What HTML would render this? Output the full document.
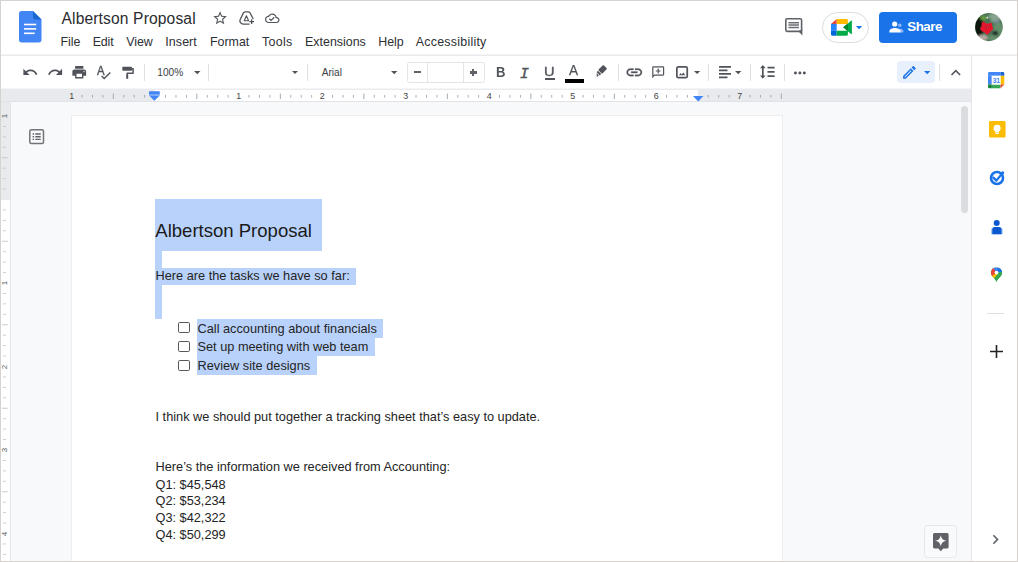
<!DOCTYPE html>
<html lang="en">
<head>
<meta charset="utf-8">
<title>Albertson Proposal - Google Docs</title>
<style>
*{box-sizing:border-box;margin:0;padding:0}
html,body{width:1018px;height:562px;overflow:hidden;background:#fff}
body{font-family:"Liberation Sans",sans-serif;color:#202124;position:relative}
#root{position:absolute;left:0;top:0;width:1018px;height:562px;overflow:hidden;background:#fff}
#frame{position:absolute;left:0;top:0;width:1018px;height:562px;border:1px solid #d6d2d0;z-index:100;pointer-events:none}
.abs{position:absolute}
svg{position:absolute;display:block;overflow:visible}
.t{position:absolute;white-space:nowrap;line-height:1}
/* header */
#hdrline{left:1px;top:54px;width:1016px;height:2px;background:linear-gradient(#f5f6f7 50%,#e8eaed 50%)}
.menu{font-size:12.400px;color:#2d2f33;top:36.100px}
#title{left:61.500px;top:10.900px;font-size:15.600px;letter-spacing:0.140px;color:#2a2c30}
/* toolbar */
.sep{position:absolute;width:1px;background:#dfe1e5;top:64px;height:17px}
.tb{font-size:10.150px;color:#3c4043;top:67.6px}
/* ruler */
#rulerbg{left:1px;top:89px;width:971px;height:13px;background:#e8eaed}
#rulerwhite{left:155px;top:89px;width:543px;height:13px;background:#fff}
.rn{font-size:8.900px;color:#444;top:91.600px;width:12px;text-align:center}
.vn{font-size:7.900px;color:#5a5e63;transform:rotate(-90deg);width:8px;text-align:center;height:10px;line-height:10px}
/* workspace */
#work{left:1px;top:102px;width:971px;height:459px;background:#f8f9fa}
#vruler{left:1px;top:102px;width:10px;height:459px;background:#fff;border-right:1px solid #e3e5e8}
#vrulergray{left:1px;top:102px;width:9px;height:98px;background:#e8eaed}
#page{left:72px;top:116px;width:710px;height:460px;background:#fff;box-shadow:0 0 0 1px #eceef0}
.sel{position:absolute;background:#b9d2fb}
.doc{color:#242424;font-size:12.75px}
#h1{font-size:18.55px;color:#1a1a1a}
.cb{position:absolute;width:11.600px;height:11.400px;border:1.500px solid #585858;border-radius:1.800px;background:#fff;left:178.2px}
/* side panel */
#side{left:971px;top:56px;width:46px;height:505px;background:#fff;border-left:1px solid #e4e6e9}
</style>
</head>
<body>
<div id="root">

<!-- ===== HEADER ===== -->
<svg id="docsicon" style="left:19px;top:11px" width="22.500" height="31.500" viewBox="0 0 22.500 31.500">
  <path d="M2.700 0H14L22.500 8.500V28.800a2.700 2.700 0 0 1-2.700 2.700H2.700A2.700 2.700 0 0 1 0 28.800V2.700A2.700 2.700 0 0 1 2.700 0z" fill="#4285f4"/>
  <path d="M14 0L22.500 8.500H16.200a2.200 2.200 0 0 1-2.200-2.200z" fill="#1a67d2"/>
  <rect x="5" y="12.700" width="12.200" height="1.600" fill="#fff"/>
  <rect x="5" y="17.100" width="12.200" height="1.600" fill="#fff"/>
  <rect x="5" y="21.500" width="10.700" height="1.600" fill="#fff"/>
</svg>
<div class="t" id="title">Albertson Proposal</div>

<div class="t menu" id="m1" style="left:60.500px;letter-spacing:-0.050px">File</div>
<div class="t menu" id="m2" style="left:92.700px;letter-spacing:-0.150px">Edit</div>
<div class="t menu" id="m3" style="left:126.200px;letter-spacing:-0.050px">View</div>
<div class="t menu" id="m4" style="left:165.300px;letter-spacing:0.100px">Insert</div>
<div class="t menu" id="m5" style="left:209.900px;letter-spacing:0.030px">Format</div>
<div class="t menu" id="m6" style="left:262px;letter-spacing:0.320px">Tools</div>
<div class="t menu" id="m7" style="left:305.100px;letter-spacing:0.010px">Extensions</div>
<div class="t menu" id="m8" style="left:378.300px;letter-spacing:-0.050px">Help</div>
<div class="t menu" id="m9" style="left:415.800px;letter-spacing:0.250px">Accessibility</div>


<!-- title icons -->
<svg id="star" style="left:211.550px;top:10px" width="16.200" height="16.200" viewBox="0 0 24 24"><path fill="#50545a" d="M22 9.240l-7.190-.620L12 2 9.190 8.630 2 9.240l5.460 4.730L5.820 21 12 17.270 18.180 21l-1.630-7.030L22 9.240zM12 15.400l-3.760 2.270 1-4.280-3.320-2.880 4.380-.380L12 6.100l1.710 4.040 4.380.380-3.320 2.880 1 4.280L12 15.400z"/></svg>
<svg id="drive" style="left:238.500px;top:10.500px" width="16" height="14.500" viewBox="0 0 16 14.500"><path fill="none" stroke="#50545a" stroke-width="1.300" stroke-linecap="round" stroke-linejoin="round" d="M10.100 13.100H4.200Q2.400 13.100 1.300 11.400Q0.400 10 1.200 8.500L4.300 2.100Q4.900 0.900 6.200 0.900H9.300Q10.500 0.900 11.100 2L14 7.500"/><path fill="none" stroke="#50545a" stroke-width="1.100" stroke-linejoin="round" d="M7.400 4.800L5.200 9.700H9.600z"/><path fill="none" stroke="#50545a" stroke-width="1.300" d="M10.300 10.700h4.700M12.650 8.300v4.800"/></svg>
<svg id="cloud" style="left:265px;top:10.600px" width="14.500" height="14.500" viewBox="0 0 24 24"><path fill="#50545a" d="M19.350 10.040C18.670 6.590 15.640 4 12 4 9.110 4 6.600 5.640 5.350 8.040 2.340 8.360 0 10.910 0 14c0 3.310 2.690 6 6 6h13c2.760 0 5-2.240 5-5 0-2.640-2.050-4.780-4.650-4.960zM19 18H6c-2.210 0-4-1.790-4-4 0-2.050 1.530-3.760 3.560-3.970l1.070-.110.500-.950C8.080 7.140 9.940 6 12 6c2.620 0 4.880 1.860 5.390 4.430l.300 1.500 1.530.110c1.560.100 2.780 1.410 2.780 2.960 0 1.650-1.350 3-3 3zm-9-3.820l-2.090-2.090L6.500 13.500 10 17l6.010-6.010-1.410-1.410z"/></svg>

<!-- comment history -->
<svg id="cmt" style="left:784.800px;top:17.700px" width="17.400" height="17.600" viewBox="0 0 17.400 17.600"><rect x="0.800" y="0.800" width="15.800" height="12.600" rx="1.300" fill="none" stroke="#5f6368" stroke-width="1.600"/><path d="M13.300 13.300L17.400 17.400V11.500z" fill="#5f6368"/><path d="M3.500 4h10.500v1.500H3.500zM3.500 6.300h10.500v1.500H3.500zM3.500 8.700h10.500v1.500H3.500z" fill="#6a6e73"/></svg>

<!-- meet pill -->
<div class="abs" id="meet" style="left:822.400px;top:11.700px;width:46.300px;height:31px;border:1px solid #dadce0;border-radius:15.500px;background:#fff"></div>
<svg id="meeticon" style="left:831px;top:19px" width="21" height="16.800" viewBox="0 0 21 16.800">
  <path d="M0 4.900L5.700 0V4.900z" fill="#ea4335"/>
  <path d="M5.700 0H15.400a1.500 1.500 0 0 1 1.500 1.500V4.900H5.700z" fill="#ffba00"/>
  <path d="M0 4.900H5.700V11.800H0z" fill="#2684fc"/>
  <path d="M0 11.800H5.700V16.800H1.500A1.500 1.500 0 0 1 0 15.300z" fill="#0066da"/>
  <path d="M5.700 11.800H16.900V15.300a1.500 1.500 0 0 1-1.500 1.500H5.700z" fill="#00ac47"/>
  <path d="M12.200 8.350L16.900 4.400L20 1.700c.400-.350.900-.100.900.400V14.600c0 .500-.500.750-.900.400L16.900 12.300z" fill="#00ac47"/>
  <path d="M12.200 8.350L16.900 4.400V12.300z" fill="#00832d"/>
</svg>
<svg id="meetarrow" style="left:856px;top:25.500px" width="6.200" height="3.200" viewBox="0 0 10 5"><path d="M0 0h10L5 5z" fill="#1a73e8"/></svg>

<!-- share -->
<div class="abs" id="share" style="left:879.200px;top:11.700px;width:78px;height:31px;border-radius:4px;background:#1a73e8"></div>
<svg id="shareicon" style="left:889px;top:20.300px" width="15.500" height="13" viewBox="0 0 15.500 13">
  <circle cx="10.800" cy="5.200" r="1.800" fill="#8ab4f8"/>
  <path d="M10.200 8.600c2.200 0 4.200 1 4.200 2.500V12.400H11z" fill="#8ab4f8"/>
  <circle cx="5.700" cy="4" r="2.600" fill="#fff"/>
  <path d="M5.900 8.100C3.600 8.100.400 9.100.400 11v1.400H11.600V11c0-1.900-3.400-2.900-5.700-2.900z" fill="#fff"/>
</svg>
<div class="t" id="sharetxt" style="left:907.300px;top:19.700px;font-size:13.400px;font-weight:bold;color:#fff;letter-spacing:-0.520px">Share</div>

<!-- avatar -->
<svg id="avatar" style="left:974.6px;top:12.6px" width="27.800" height="28.200" viewBox="0 0 27.800 28.200">
  <defs><clipPath id="avc"><ellipse cx="13.900" cy="14.100" rx="13.900" ry="14.100"/></clipPath>
  <filter id="avb" x="-20%" y="-20%" width="140%" height="140%"><feGaussianBlur stdDeviation="1.100"/></filter>
  <filter id="avb2" x="-20%" y="-20%" width="140%" height="140%"><feGaussianBlur stdDeviation="0.450"/></filter></defs>
  <g clip-path="url(#avc)">
    <g filter="url(#avb)">
    <rect x="-6" y="-6" width="40" height="40" fill="#4c7454"/>
    <ellipse cx="4.1" cy="13.9" rx="5.0" ry="10.7" fill="#0e120e" opacity="1"/>
    <ellipse cx="8.3" cy="5.0" rx="3.2" ry="2.0" fill="#6aa040" opacity="1"/>
    <ellipse cx="19.0" cy="4.7" rx="6.4" ry="4.3" fill="#86a48f" opacity="1"/>
    <ellipse cx="21.9" cy="8.9" rx="2.5" ry="2.1" fill="#7d88a0" opacity="1"/>
    <ellipse cx="23.3" cy="16.8" rx="5.0" ry="7.8" fill="#64906c" opacity="1"/>
    <ellipse cx="20.4" cy="20.3" rx="2.8" ry="2.5" fill="#16241a" opacity="1"/>
    <ellipse cx="7.6" cy="24.6" rx="5.3" ry="2.8" fill="#b5aaa2" opacity="1"/>
    <ellipse cx="18.3" cy="25.3" rx="5.0" ry="3.2" fill="#668f6c" opacity="1"/>
    <ellipse cx="14.0" cy="6.8" rx="2.1" ry="1.8" fill="#3e6a46" opacity="1"/>
    </g>
    <g filter="url(#avb2)">
    <circle cx="12.3" cy="4.7" r="0.900" fill="#dfe8df"/>
    <polygon points="6.6,9.6 8.7,8.6 11.5,10.7 16.9,10.0 17.2,13.2 18.3,16.0 15.8,18.2 14.0,20.3 12.3,21.7 9.4,19.6 5.9,17.5 5.1,15.3 6.6,12.8" fill="#e3172d"/>
    <circle cx="12.3" cy="14.3" r="1.800" fill="#c01228"/>
    <circle cx="12.4" cy="14.3" r="0.700" fill="#d86070"/>
    </g>
  </g>
</svg>

<div class="abs" id="hdrline"></div>

<!-- ===== TOOLBAR ===== -->
<div class="sep" style="left:144px"></div>
<div class="t tb" id="zoomtxt" style="left:157.3px">100%</div>
<div class="sep" style="left:208px"></div>
<div class="sep" style="left:307px"></div>
<div class="t tb" id="fonttxt" style="left:321.7px">Arial</div>


<!-- toolbar icons -->
<svg id="undo" style="left:21.75px;top:64.25px" width="16.5" height="16.5" viewBox="0 0 24 24"><path fill="#50545a" d="M12.5 8c-2.65 0-5.05.99-6.9 2.6L2 7v9h9l-3.62-3.62c1.39-1.16 3.16-1.88 5.12-1.88 3.54 0 6.55 2.31 7.6 5.5l2.37-.78C21.08 11.03 17.15 8 12.5 8z"/></svg>
<svg id="redo" style="left:46.75px;top:64.25px" width="16.5" height="16.5" viewBox="0 0 24 24"><path fill="#50545a" d="M18.4 10.6C16.55 8.99 14.15 8 11.5 8c-4.65 0-8.58 3.03-9.96 7.22L3.9 16c1.05-3.19 4.05-5.5 7.6-5.5 1.95 0 3.73.72 5.12 1.88L13 16h9V7l-3.6 3.6z"/></svg>
<svg id="print" style="left:70.75px;top:63.95px" width="16.5" height="16.5" viewBox="0 0 24 24"><path fill="#50545a" d="M19 8H5c-1.66 0-3 1.34-3 3v6h4v4h12v-4h4v-6c0-1.66-1.34-3-3-3zm-3 11H8v-5h8v5zm3-7c-.55 0-1-.45-1-1s.45-1 1-1 1 .45 1 1-.45 1-1 1zm-1-9H6v4h12V3z"/></svg>
<div class="t" id="spellA" style="left:96.700px;top:64.700px;font-size:12.200px;color:#50545a;-webkit-text-stroke:0.400px #50545a;transform:scaleX(0.93);transform-origin:0 0">A</div>
<svg id="spell" style="left:101px;top:71.500px" width="10" height="8" viewBox="0 0 10 8"><path d="M0.600 4l2.600 2.600L9.300 0.600" fill="none" stroke="#50545a" stroke-width="1.400"/></svg>
<svg id="paint" style="left:122px;top:66px" width="13" height="13.500" viewBox="0 0 13 13.500"><rect x="0.300" y="0.700" width="9.700" height="4.100" rx="0.800" fill="#50545a"/><path d="M9.900 2.800H11.100V7.200H5.200V9" fill="none" stroke="#50545a" stroke-width="1.500" stroke-linejoin="round"/><path d="M4.200 8.500h2v4.300H4.200z" fill="#50545a"/></svg>
<svg id="za" style="left:194.00px;top:70.97px" width="6.50" height="3.25" viewBox="0 0 10 5"><path d="M0 0h10L5 5z" fill="#50545a"/></svg>
<svg id="sa" style="left:292.40px;top:71.10px" width="6.00" height="3.00" viewBox="0 0 10 5"><path d="M0 0h10L5 5z" fill="#50545a"/></svg>
<svg id="fa" style="left:391.40px;top:71.00px" width="6.40" height="3.20" viewBox="0 0 10 5"><path d="M0 0h10L5 5z" fill="#50545a"/></svg>
<div class="abs" id="fsbox" style="left:406.800px;top:61.800px;width:78px;height:20.800px;border:1px solid #e1e3e6;border-radius:2.500px"></div>
<div class="abs" style="left:427.200px;top:62px;width:1px;height:20.500px;background:#e1e3e6"></div>
<div class="abs" style="left:463.300px;top:62px;width:1px;height:20.500px;background:#e1e3e6"></div>
<div class="abs" id="minus" style="left:414.100px;top:70.700px;width:7.100px;height:2.200px;background:#5f6368"></div>
<div class="abs" id="plush" style="left:469.800px;top:71.450px;width:7.100px;height:2.200px;background:#5f6368"></div>
<div class="abs" id="plusv" style="left:472.250px;top:69px;width:2.200px;height:7.100px;background:#5f6368"></div>
<div class="t" id="bold" style="left:495.600px;top:64.800px;font-size:14.500px;font-weight:bold;color:#50545a;transform:scaleX(0.9);transform-origin:0 0">B</div>
<div class="t" id="italic" style="left:519.800px;top:66.600px;font-family:'Liberation Mono',monospace;font-style:italic;font-size:15.400px;color:#50545a;-webkit-text-stroke:0.350px #50545a">I</div>
<div class="t" id="under" style="left:543.900px;top:65px;font-size:13.300px;color:#50545a;-webkit-text-stroke:0.350px #50545a;transform:scaleX(1.1);transform-origin:0 0">U</div>
<div class="abs" id="underbar" style="left:544.800px;top:78.400px;width:9.800px;height:1.300px;background:#50545a"></div>
<div class="t" id="tcolor" style="left:569.300px;top:62.700px;font-size:14.600px;color:#50545a;-webkit-text-stroke:0.250px #50545a;transform:scaleX(0.93);transform-origin:0 0">A</div>
<div class="abs" id="tcbar" style="left:565.100px;top:78.800px;width:19.100px;height:3.800px;background:#000"></div>
<svg id="hl" style="left:595px;top:64.800px" width="12" height="12" viewBox="-6 -6 12 12"><g transform="rotate(-45)"><rect x="-1.300" y="-2.800" width="7.300" height="5.600" rx="0.900" fill="#50545a"/><path d="M-2 -2.300H-4V2.300H-2z" fill="#50545a"/><path d="M-4.600 -1.500V1.500H-7.400z" fill="#50545a"/></g></svg>
<div class="sep" style="left:617.500px"></div>
<svg id="link" style="left:624.50px;top:63.00px" width="18.6" height="18.6" viewBox="0 0 24 24"><path stroke="#50545a" stroke-width="0.350" fill="#50545a" d="M3.9 12c0-1.71 1.39-3.1 3.1-3.1h4V7H7c-2.76 0-5 2.24-5 5s2.24 5 5 5h4v-1.9H7c-1.71 0-3.1-1.39-3.1-3.1zM8 13h8v-2H8v2zm9-6h-4v1.900h4c1.710 0 3.100 1.390 3.100 3.100s-1.390 3.100-3.100 3.100h-4V17h4c2.760 0 5-2.240 5-5s-2.240-5-5-5z"/></svg>
<svg id="addc" style="left:651.00px;top:65.40px" width="14.4" height="14.4" viewBox="0 0 24 24"><path fill="#50545a" d="M20 2H4c-1.100 0-2 .900-2 2v18l4-4h14c1.100 0 2-.900 2-2V4c0-1.100-.900-2-2-2zm0 14H5.170L4 17.170V4h16v12zM11 6h2v3h3v2h-3v3h-2v-3H8V9h3z"/></svg>
<svg id="image" style="left:676px;top:66.200px" width="12.100" height="12.500" viewBox="0 0 12.100 12.500"><rect x="0.850" y="0.850" width="10.400" height="10.800" rx="1.500" fill="none" stroke="#50545a" stroke-width="1.700"/><path d="M3 9.200L4.700 7l1.100 1.400L7.300 6.500 9.300 9.200z" fill="#50545a"/></svg>
<svg id="ia" style="left:693.60px;top:71.05px" width="6.20" height="3.10" viewBox="0 0 10 5"><path d="M0 0h10L5 5z" fill="#50545a"/></svg>
<div class="sep" style="left:708px"></div>
<svg id="align" style="left:719.200px;top:66.100px" width="12" height="12.500" viewBox="0 0 12 12.500"><path d="M0 0.100h12v1.700H0zM0 3.500h8.500v1.700H0zM0 7.100h12v1.700H0zM0 10.600h8.500v1.700H0z" fill="#50545a"/></svg>
<svg id="aa" style="left:735.40px;top:71.00px" width="6.40" height="3.20" viewBox="0 0 10 5"><path d="M0 0h10L5 5z" fill="#50545a"/></svg>
<div class="sep" style="left:750.300px"></div>
<svg id="lsp" style="left:759.600px;top:65.400px" width="14.800" height="13.800" viewBox="0 0 14.800 13.800"><path d="M2.800 0L5.600 3.300H3.650V10.500H5.600L2.800 13.800 0 10.500H1.950V3.300H0z" fill="#50545a"/><path d="M7.500 1.700h7.100v1.800H7.500zM7.500 6h7.100v1.800H7.500zM7.500 10.300h7.100v1.800H7.500z" fill="#50545a"/></svg>
<div class="sep" style="left:783.900px"></div>
<svg id="more" style="left:791.30px;top:63.70px" width="17.8" height="17.8" viewBox="0 0 24 24"><path fill="#50545a" d="M6 10c-1.100 0-2 .900-2 2s.900 2 2 2 2-.900 2-2-.900-2-2-2zm12 0c-1.100 0-2 .900-2 2s.900 2 2 2 2-.900 2-2-.900-2-2-2zm-6 0c-1.100 0-2 .900-2 2s.900 2 2 2 2-.900 2-2-.900-2-2-2z"/></svg>
<div class="abs" id="editbox" style="left:897.400px;top:61px;width:37.500px;height:22px;border-radius:4px;background:#e8f0fe"></div>
<svg id="edit" style="left:901.20px;top:63.80px" width="16.8" height="16.8" viewBox="0 0 24 24"><path fill="#1a73e8" d="M14.060 9.020l.920.920L5.920 19H5v-.920l9.060-9.060M17.660 3c-.250 0-.510.100-.700.290l-1.830 1.830 3.750 3.750 1.830-1.830c.390-.390.390-1.020 0-1.410l-2.340-2.340c-.200-.200-.450-.290-.710-.290zm-3.600 3.190L3 17.250V21h3.750L17.810 9.940l-3.750-3.750z"/></svg>
<svg id="ea" style="left:924.00px;top:70.80px" width="6.40" height="3.20" viewBox="0 0 10 5"><path d="M0 0h10L5 5z" fill="#1a73e8"/></svg>
<div class="sep" style="left:939.200px"></div>
<svg id="less" style="left:946.20px;top:62.60px" width="19.6" height="19.6" viewBox="0 0 24 24"><path fill="#50545a" d="M12 8l-6 6 1.410 1.410L12 10.830l4.590 4.580L18 14z"/></svg>

<!-- ===== RULER ===== -->
<div class="abs" id="rulerbg"></div>
<div class="abs" id="rulerwhite"></div>
<div class="abs" style="left:1px;top:88px;width:971px;height:1px;background:#f4f5f7"></div>
<div class="abs" style="left:155px;top:89px;width:543px;height:1px;background:#e9ebee"></div>
<div class="abs" style="left:1px;top:101px;width:971px;height:1px;background:#e1e3e7"></div>


<!-- ruler ticks -->
<svg id="hticks" style="left:0;top:89px" width="972" height="13" viewBox="0 0 972 13">
<path d="M82.04 6v2.600M92.47 6v2.600M102.91 6v2.600M113.35 4.600v5.400M123.79 6v2.600M134.22 6v2.600M144.66 6v2.600M165.54 6v2.600M175.97 6v2.600M186.41 6v2.600M196.85 4.600v5.400M207.29 6v2.600M217.72 6v2.600M228.16 6v2.600M249.04 6v2.600M259.48 6v2.600M269.91 6v2.600M280.35 4.600v5.400M290.79 6v2.600M301.23 6v2.600M311.66 6v2.600M332.54 6v2.600M342.98 6v2.600M353.41 6v2.600M363.85 4.600v5.400M374.29 6v2.600M384.73 6v2.600M395.16 6v2.600M416.04 6v2.600M426.48 6v2.600M436.91 6v2.600M447.35 4.600v5.400M457.79 6v2.600M468.23 6v2.600M478.66 6v2.600M499.54 6v2.600M509.98 6v2.600M520.41 6v2.600M530.85 4.600v5.400M541.29 6v2.600M551.73 6v2.600M562.16 6v2.600M583.04 6v2.600M593.48 6v2.600M603.91 6v2.600M614.35 4.600v5.400M624.79 6v2.600M635.23 6v2.600M645.66 6v2.600M666.54 6v2.600M676.98 6v2.600M687.41 6v2.600M708.29 6v2.600M718.73 6v2.600M729.16 6v2.600M750.04 6v2.600M760.48 6v2.600M770.91 6v2.600M781.35 4.600v5.400" stroke="#9aa0a6" stroke-width="0.900" fill="none"/>
</svg>
<div class="t rn" style="left:65.6px">1</div>
<div class="t rn" style="left:232.6px">1</div>
<div class="t rn" style="left:316.1px">2</div>
<div class="t rn" style="left:399.6px">3</div>
<div class="t rn" style="left:483.1px">4</div>
<div class="t rn" style="left:566.6px">5</div>
<div class="t rn" style="left:650.1px">6</div>
<div class="t rn" style="left:733.6px">7</div>
<svg id="lmark" style="left:149.100px;top:91.300px" width="10.800" height="9.800" viewBox="0 0 10.800 9.800"><path d="M0.600 0.200h9.600a.6.6 0 0 1 .6.600v2.900H0V.800a.6.6 0 0 1 .6-.600z" fill="#4285f4"/><path d="M0 3.700h10.800v.8H0z" fill="#8ab4f8"/><path d="M0 4.500h10.800L5.400 9.800z" fill="#4285f4"/></svg>
<svg id="rmark" style="left:692.500px;top:95.600px" width="10.400" height="5.400" viewBox="0 0 10.400 5.400"><path d="M0 0h10.400L5.200 5.400z" fill="#4285f4"/></svg>

<!-- ===== WORKSPACE ===== -->
<div class="abs" id="work"></div>
<div class="abs" id="vruler"></div>
<div class="abs" id="vrulergray"></div>
<div class="abs" id="page"></div>


<!-- vertical ruler ticks -->
<svg id="vticks" style="left:1px;top:102px" width="10" height="459" viewBox="0 0 10 459">
<path d="M2 24.44h2.900M2 34.88h2.900M2 45.31h2.900M1 55.75h5.800M2 66.19h2.900M2 76.62h2.900M2 87.06h2.900M2 107.94h2.900M2 118.38h2.900M2 128.81h2.900M1 139.25h5.800M2 149.69h2.900M2 160.12h2.900M2 170.56h2.900M2 191.44h2.900M2 201.88h2.900M2 212.31h2.900M1 222.75h5.800M2 233.19h2.900M2 243.62h2.900M2 254.06h2.900M2 274.94h2.900M2 285.38h2.900M2 295.81h2.900M1 306.25h5.800M2 316.69h2.900M2 327.12h2.900M2 337.56h2.900M2 358.44h2.900M2 368.88h2.900M2 379.31h2.900M1 389.75h5.800M2 400.19h2.900M2 410.62h2.900M2 421.06h2.900M2 441.94h2.900M2 452.38h2.900" stroke="#c3c6cb" stroke-width="0.900" fill="none"/>
</svg>
<div class="t vn" style="left:1.200px;top:111.0px">1</div>
<div class="t vn" style="left:1.200px;top:278.0px">1</div>
<div class="t vn" style="left:1.200px;top:361.5px">2</div>
<div class="t vn" style="left:1.200px;top:445.0px">3</div>
<div class="t vn" style="left:1.200px;top:528.5px">4</div>
<svg id="outline" style="left:29px;top:129.400px" width="15.300" height="15.300" viewBox="0 0 15.300 15.300"><rect x="0.800" y="0.800" width="13.700" height="13.700" rx="1.600" fill="none" stroke="#70757a" stroke-width="1.500"/><path d="M3.600 4.300h1.500v1.400H3.600zM6.300 4.300h5.400v1.400H6.300zM3.600 7h1.500v1.400H3.600zM6.300 7h5.400v1.400H6.300zM3.600 9.700h1.500v1.400H3.600zM6.300 9.700h5.400v1.400H6.300z" fill="#5f6368"/></svg>
<div class="abs" id="scroll" style="left:961px;top:105.800px;width:7.200px;height:107.400px;border-radius:3.600px;background:#dadce0"></div>
<div class="abs" id="explore" style="left:924.300px;top:525.400px;width:32.800px;height:33px;border-radius:3.500px;background:#f9fafb;border:1px solid #e6e8eb"></div>
<svg id="exploreicon" style="left:933.400px;top:532.800px" width="15.600" height="18.500" viewBox="0 0 15.600 18.500"><path d="M1.500 0h12.600a1.500 1.500 0 0 1 1.500 1.500v12.600a1.500 1.500 0 0 1-1.500 1.500H10.300L7.800 18.300 5.300 15.600H1.500A1.500 1.500 0 0 1 0 14.100V1.500A1.500 1.500 0 0 1 1.500 0z" fill="#5f6368"/><path d="M7.800 2C8.400 5.700 9.900 7.200 13.600 7.800 9.900 8.400 8.400 9.900 7.800 13.600 7.200 9.900 5.700 8.400 2 7.800 5.700 7.200 7.200 5.700 7.800 2z" fill="#fff"/></svg>

<!-- selections -->
<div class="sel" style="left:155.4px;top:199.3px;width:166.7px;height:52px"></div>
<div class="sel" style="left:155.4px;top:251px;width:6.900px;height:68px"></div>
<div class="sel" style="left:155.4px;top:268.100px;width:200.8px;height:17.200px"></div>
<div class="sel" style="left:196.9px;top:319.3px;width:186.6px;height:18.3px"></div>
<div class="sel" style="left:196.9px;top:337.5px;width:178px;height:18.7px"></div>
<div class="sel" style="left:196.9px;top:356.1px;width:119.8px;height:18.7px"></div>

<!-- doc text -->
<div class="t doc" id="h1" style="left:155.3px;top:221.6px">Albertson Proposal</div>
<div class="t doc" id="p1" style="left:155.5px;top:270.3px">Here are the tasks we have so far:</div>
<div class="cb" style="top:322.1px"></div>
<div class="cb" style="top:340.8px"></div>
<div class="cb" style="top:359.5px"></div>
<div class="t doc" id="l1" style="left:197.5px;top:323.4px">Call accounting about financials</div>
<div class="t doc" id="l2" style="left:197.5px;top:341.1px">Set up meeting with web team</div>
<div class="t doc" id="l3" style="left:197.5px;top:359.8px">Review site designs</div>
<div class="t doc" id="p2" style="left:155.5px;top:411.3px">I think we should put together a tracking sheet that’s easy to update.</div>
<div class="t doc" id="p3" style="left:155.5px;top:460.6px">Here’s the information we received from Accounting:</div>
<div class="t doc" id="q1" style="left:155.5px;top:478.8px">Q1: $45,548</div>
<div class="t doc" id="q2" style="left:155.5px;top:495.1px">Q2: $53,234</div>
<div class="t doc" id="q3" style="left:155.5px;top:512.2px">Q3: $42,322</div>
<div class="t doc" id="q4" style="left:155.5px;top:529.1px">Q4: $50,299</div>

<!-- ===== SIDE PANEL ===== -->
<div class="abs" id="side"></div>
<svg id="cal" style="left:988px;top:72px" width="16.300" height="16.300" viewBox="0 0 16.300 16.300">
  <path d="M0 1.500A1.500 1.500 0 0 1 1.500 0H12.500V3.800H0z" fill="#4285f4"/>
  <path d="M0 3.800H3.800V12.500H0z" fill="#4285f4"/>
  <path d="M12.500 0H14.800A1.500 1.500 0 0 1 16.300 1.500V3.800H12.500z" fill="#1967d2"/>
  <path d="M12.500 3.800H16.300V12.500H12.500z" fill="#fbbc04"/>
  <path d="M3.800 12.500H12.500V16.300H3.800z" fill="#34a853"/>
  <path d="M0 12.500H3.800V16.300H1.500A1.500 1.500 0 0 1 0 14.800z" fill="#188038"/>
  <path d="M12.500 12.500H16.300L12.500 16.300z" fill="#ea4335"/>
  <rect x="3.800" y="3.800" width="8.700" height="8.700" fill="#fff"/>
  <text x="8.150" y="11.100" font-family="Liberation Sans, sans-serif" font-size="6.800" font-weight="bold" fill="#4285f4" text-anchor="middle" letter-spacing="-0.300">31</text>
</svg>
<svg id="keep" style="left:988.500px;top:120.900px" width="16.600" height="16.500" viewBox="0 0 16.600 16.500">
  <rect width="16.600" height="16.500" rx="1.300" fill="#fbbc04"/>
  <circle cx="8.100" cy="7.300" r="3.500" fill="#fff"/>
  <rect x="6.400" y="10" width="3.400" height="3" rx="0.500" fill="#fff"/>
  <rect x="6.400" y="11.400" width="3.400" height="0.600" fill="#fbbc04" opacity="0.600"/>
</svg>
<svg id="tasks" style="left:988.600px;top:169.700px" width="16" height="16" viewBox="0 0 16 16">
  <circle cx="8" cy="8" r="6" fill="none" stroke="#1a73e8" stroke-width="2.600"/>
  <path d="M4.400 7.600l3 3L13.600 2.900" fill="none" stroke="#1a73e8" stroke-width="2.300" stroke-linecap="round" stroke-linejoin="round"/>
  <circle cx="13.700" cy="2.700" r="1.500" fill="#1a73e8"/>
</svg>
<svg id="contacts" style="left:990.900px;top:219.500px" width="11.800" height="14.200" viewBox="0 0 11.800 14.200">
  <circle cx="5.700" cy="3.100" r="3" fill="#0b57d0"/>
  <path d="M0 14.200v-3.600C0 8.500 1.500 7.100 3.500 7.100h4.800c2 0 3.500 1.400 3.500 3.500v3.600z" fill="#a8c7fa"/>
  <path d="M1.300 14.200V9.600C1.300 8 2.600 7.100 3.800 7.100h4.200c1.200 0 2.500.900 2.500 2.500v4.600z" fill="#0b57d0"/>
</svg>
<svg id="maps" style="left:991.100px;top:267.300px" width="11" height="15.200" viewBox="0 0 11 14.800">
  <defs><clipPath id="pin"><path d="M5.500 0C2.460 0 0 2.460 0 5.500c0 1.400.530 2.600 1.350 3.670C2.800 11 4.440 12 5.500 14.800 6.560 12 8.200 11 9.650 9.170 10.470 8.100 11 6.900 11 5.500 11 2.460 8.540 0 5.500 0z"/></clipPath></defs>
  <g clip-path="url(#pin)">
    <rect width="11" height="14.800" fill="#34a853"/>
    <path d="M0 0h11v4L5.500 5.500 2 2.500 0 3z" fill="#4285f4"/>
    <path d="M0 1.500L2.500 1 5.500 5.500 0.500 9.500 0 9z" fill="#ea4335"/>
    <path d="M0.300 9.300L5.500 5.500l1.200 1.700L2.600 11.800z" fill="#fbbc04"/>
    <path d="M11 3L5.500 5.500 6.700 7.200 2.600 11.800 5.500 14.800 11 9z" fill="#34a853"/>
    <path d="M7.500 0.500L11 2.500v2L5.500 5.500z" fill="#1a73e8"/>
  </g>
  <circle cx="5.500" cy="5.400" r="1.900" fill="#fff"/>
</svg>
<div class="abs" style="left:987px;top:312.500px;width:17px;height:1px;background:#e0e0e0"></div>
<svg id="addon" style="left:989.600px;top:345.300px" width="13" height="13" viewBox="0 0 13 13"><path d="M5.700 0h1.600v5.700H13v1.600H7.300V13H5.700V7.300H0V5.700h5.700z" fill="#202124"/></svg>
<svg id="hide" style="left:985.800px;top:529.900px" width="19" height="19" viewBox="0 0 24 24"><path d="M10 6L8.590 7.410 13.170 12l-4.580 4.590L10 18l6-6z" fill="#5f6368"/></svg>


</div>
<div id="frame"></div>
</body>
</html>
